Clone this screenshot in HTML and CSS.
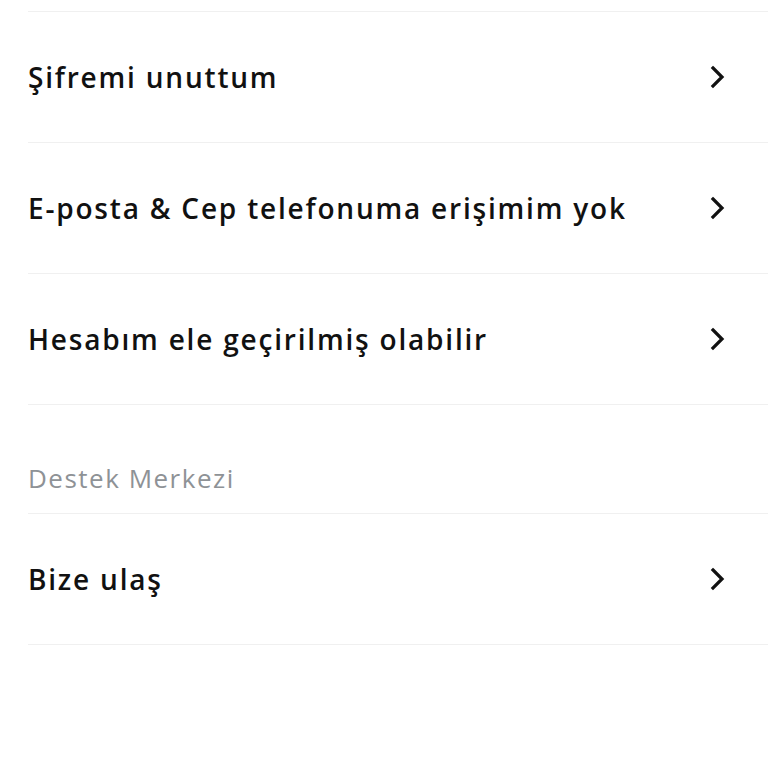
FILE: index.html
```html
<!DOCTYPE html>
<html lang="tr">
<head>
<meta charset="utf-8">
<link rel="stylesheet" href="styles.css">
</head>
<body>
<div class="list">
  <div class="top"></div>
  <div class="row"><span class="label">Şifremi unuttum</span><svg class="chev" viewBox="0 0 16 24" width="16" height="24"><polyline points="3,3 12,12 3,21"/></svg></div>
  <div class="row"><span class="label">E-posta &amp; Cep telefonuma erişimim yok</span><svg class="chev" viewBox="0 0 16 24" width="16" height="24"><polyline points="3,3 12,12 3,21"/></svg></div>
  <div class="row"><span class="label">Hesabım ele geçirilmiş olabilir</span><svg class="chev" viewBox="0 0 16 24" width="16" height="24"><polyline points="3,3 12,12 3,21"/></svg></div>
  <div class="header">Destek Merkezi</div>
  <div class="row"><span class="label">Bize ulaş</span><svg class="chev" viewBox="0 0 16 24" width="16" height="24"><polyline points="3,3 12,12 3,21"/></svg></div>
</div>
</body>
</html>
```
FILE: styles.css
```css
html, body {
  margin: 0;
  padding: 0;
  background: #ffffff;
}
body {
  font-family: "Open Sans", "Noto Sans", sans-serif;
  color: #111111;
}
.list {
  margin-left: 28px;
}
.top {
  height: 11px;
  border-bottom: 1px solid #f0f0f0;
}
.row {
  height: 130px;
  border-bottom: 1px solid #f0f0f0;
  display: flex;
  align-items: center;
  justify-content: space-between;
  padding-right: 42px;
}
.label {
  font-size: 28px;
  font-weight: 600;
  letter-spacing: 1.8px;
}
.chev {
  display: block;
  fill: none;
  stroke: #111111;
  stroke-width: 3.2;
  stroke-linecap: square;
  stroke-linejoin: miter;
}
.header {
  height: 70px;
  padding-top: 38px;
  border-bottom: 1px solid #f0f0f0;
  display: flex;
  align-items: center;
  font-size: 26px;
  font-weight: 400;
  letter-spacing: 1.5px;
  color: #8e9296;
}
```
